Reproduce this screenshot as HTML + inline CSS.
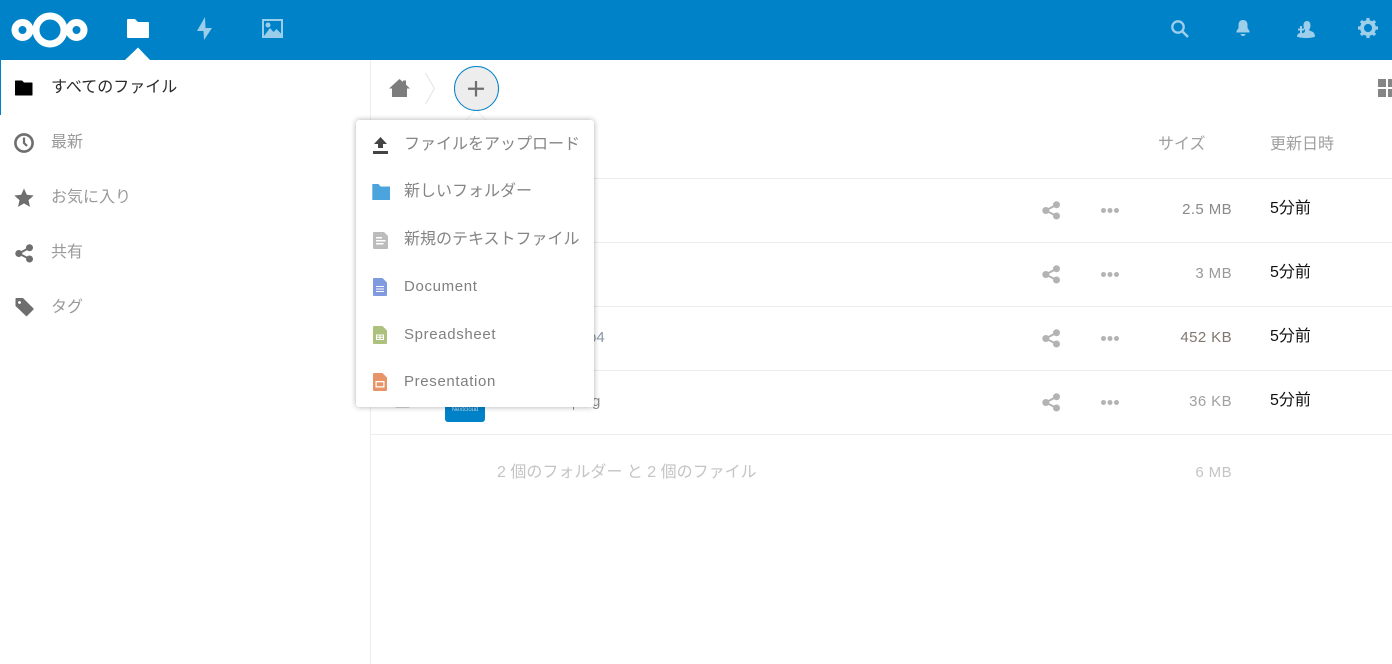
<!DOCTYPE html>
<html lang="ja"><head><meta charset="utf-8"><title>Files</title>
<style>
html,body{margin:0;padding:0;width:1392px;height:664px;overflow:hidden;background:#fff}
body{position:relative;font-family:"Liberation Sans","Noto Sans CJK JP",sans-serif;font-size:16px;color:#999}
.t{position:absolute;white-space:nowrap;line-height:20px}
.a{position:absolute;display:block}
.l{position:absolute;left:371px;right:0;height:1px;background:#ededed}
.e{font-size:15px;letter-spacing:.65px;color:#808080}
.m{color:#858585}
.s{font-size:15px;letter-spacing:.4px;color:#8a8a8a;text-align:right;width:80px;left:1152px}
.d{color:#111;left:1270px;font-size:16px}
</style></head><body>

<div class="a" style="left:0;top:0;width:1392px;height:60px;background:#0082c9"></div>
<svg class="a" style="left:11px;top:11px" width="78" height="38" viewBox="0 0 78 38"><g fill="none" stroke="#fff"><circle cx="39" cy="19" r="14" stroke-width="7"/><circle cx="11.500" cy="19" r="7.500" stroke-width="7"/><circle cx="65.500" cy="19" r="7.500" stroke-width="7"/></g></svg>
<svg class="a" style="left:127px;top:19px" width="22" height="19" viewBox="0 0 22 19"><path fill="#fff" d="M1 0h7l3 3h10q1 0 1 1v14q0 1-1 1H1q-1 0-1-1V1q0-1 1-1z"/></svg>
<svg class="a" style="left:125px;top:46px" width="26" height="14" viewBox="0 0 26 14"><path fill="#fff" d="M13 1.500L25 14H0z"/></svg>
<svg class="a" style="left:195px;top:17px" width="20" height="24" viewBox="0 0 20 24" opacity=".6"><path fill="#fff" d="M10 0L2 14H8.500L9 23L17 11H10.500z"/></svg>
<svg class="a" style="left:262px;top:19px" width="21" height="19" viewBox="0 0 21 19" opacity=".6"><path fill="#fff" fill-rule="evenodd" d="M0 0h21v19H0zM2 2v15h17V2z"/><path fill="#fff" d="M2 17l6-8 3.500 4 3-3 4.500 4.500V17z"/><circle fill="#fff" cx="6" cy="6" r="2.500"/></svg>

<svg class="a" style="left:1170px;top:19px" width="20" height="20" viewBox="0 0 20 20" opacity=".62"><circle cx="8" cy="8" r="5.700" fill="none" stroke="#fff" stroke-width="2.300"/><path d="M12 12l6 6" stroke="#fff" stroke-width="2.600"/></svg>
<svg class="a" style="left:1236px;top:20px" width="14" height="16" viewBox="0 0 14 16" opacity=".62"><path fill="#fff" d="M7 0c3 0 4.500 2 4.500 5v3l2 3v1.500H.5V11l2-3V5C2.500 2 4 0 7 0zM4.500 14h5Q9 16 7 16t-2.500-2z"/></svg>
<svg class="a" style="left:1297px;top:20px" width="18" height="18" viewBox="0 0 18 18" opacity=".62"><path fill="#fff" d="M10 1c2.500 0 3.500 2 3.500 4.500 0 2-1 3.500-1.500 4.500 0 1 4 1 5.300 3.500.5 1 .7 2.500.7 3-1 1-5 1.500-8.500 1.500S1 17.500 0 16.500c0-1.500 1-3 3-3.500V10.500H1V8.500h2V6h2v2.500h2v2H5V13c2 0 3-.5 3-2.500C7.500 9.500 6.500 8 6.500 5.500 6.500 3 7.500 1 10 1z"/></svg>
<svg class="a" style="left:1358px;top:18px" width="20" height="20" viewBox="0 0 20 20" opacity=".62"><circle cx="10" cy="10" r="6" fill="none" stroke="#fff" stroke-width="3.800"/><path d="M10 0v20M0 10h20M3 3l14 14M17 3L3 17" stroke="#fff" stroke-width="3.200" stroke-dasharray="3.200 13.600 3.200 30"/></svg>

<div class="a" style="left:370px;top:60px;width:1px;height:604px;background:#ededed"></div>
<div class="a" style="left:0;top:60px;width:1px;height:55px;background:#0082c9"></div>

<svg class="a" style="left:15px;top:79px" width="18" height="17" viewBox="0 0 18 17"><path fill="#000" d="M.5 1.500h6.500l2 2h8q.5 0 .5.500v12q0 .5-.5.500H.5q-.5 0-.5-.5V2q0-.5.500-.5z"/></svg>
<div class="t" style="left:51px;top:78px;color:#2a2a2a">すべてのファイル</div>
<svg class="a" style="left:14px;top:133px" width="20" height="20" viewBox="0 0 20 20"><circle cx="10" cy="10" r="8.600" fill="none" stroke="#6e6e6e" stroke-width="2.600"/><path d="M10 4.500V10l3 3" fill="none" stroke="#6e6e6e" stroke-width="2.200"/></svg>
<div class="t" style="left:51px;top:133px">最新</div>
<svg class="a" style="left:14px;top:188px" width="20" height="20" viewBox="0 0 20 20"><path fill="#6e6e6e" d="M10 .5l2.800 6.300 6.900.7-5.200 4.600 1.500 6.800-6-3.500-6 3.500 1.500-6.800L.3 7.500l6.900-.7z"/></svg>
<div class="t" style="left:51px;top:188px">お気に入り</div>
<svg class="a" style="left:15px;top:244px" width="19" height="19" viewBox="0 0 19 19"><g fill="#6e6e6e"><circle cx="14.500" cy="3.700" r="3.500"/><circle cx="14.500" cy="15" r="3.500"/><circle cx="3.800" cy="9.500" r="3.500"/></g><path d="M14.500 3.700L3.800 9.500l10.700 5.500" fill="none" stroke="#6e6e6e" stroke-width="2"/></svg>
<div class="t" style="left:51px;top:243px">共有</div>
<svg class="a" style="left:15px;top:298px" width="19" height="19" viewBox="0 0 19 19"><path fill="#6e6e6e" fill-rule="evenodd" d="M1 0h7l10.500 10.500q.5.500 0 1L12 18q-.5.500-1 0L.5 8V1Q.5 0 1 0zM4.500 3a1.500 1.500 0 1 0 .01 0z"/></svg>
<div class="t" style="left:51px;top:298px">タグ</div>

<svg class="a" style="left:389px;top:79px" width="21" height="19" viewBox="0 0 21 19"><path fill="#7d7d7d" d="M10.500 0l3.500 3V1.500h3v4.300l4 3.700h-3V18H3V9.500H0z"/></svg>
<svg class="a" style="left:424px;top:72px" width="13" height="33" viewBox="0 0 13 33"><path d="M1.500 1l9 15.500-9 15.500" fill="none" stroke="#e4e4e4" stroke-width="1"/></svg>
<div class="a" style="left:454px;top:66px;width:43px;height:43px;border:1px solid #0082c9;border-radius:50%;background:#ededed"></div>
<svg class="a" style="left:468px;top:81px" width="16" height="16" viewBox="0 0 16 16"><path d="M8 0v15.500M0 7.750h16" stroke="#6f6f6f" stroke-width="2.200"/></svg>
<svg class="a" style="left:1378px;top:79px" width="14" height="18" viewBox="0 0 14 18"><path fill="#858585" d="M0 0h8v8H0zM10 0h4v8h-4zM0 10h8v8H0zM10 10h4v8h-4z"/></svg>

<div class="t" style="left:1158px;top:135px;color:#a0a0a0">サイズ</div>
<div class="t" style="left:1270px;top:135px;color:#a0a0a0">更新日時</div>
<div class="l" style="top:178px"></div><div class="l" style="top:242px"></div><div class="l" style="top:306px"></div><div class="l" style="top:370px"></div><div class="l" style="top:434px"></div>

<svg width="0" height="0" style="position:absolute"><defs>
<g id="sh"><g fill="#b3b3b3"><circle cx="14.500" cy="3.700" r="3.500"/><circle cx="14.500" cy="15" r="3.500"/><circle cx="3.800" cy="9.500" r="3.500"/></g><path d="M14.500 3.700L3.800 9.500l10.700 5.500" fill="none" stroke="#b3b3b3" stroke-width="2"/></g>
<g id="dt" fill="#b3b3b3"><circle cx="2.500" cy="2.500" r="2.500"/><circle cx="9" cy="2.500" r="2.500"/><circle cx="15.500" cy="2.500" r="2.500"/></g>
</defs></svg>
<svg class="a" style="left:1042px;top:201px" width="19" height="19"><use href="#sh"/></svg>
<svg class="a" style="left:1042px;top:265px" width="19" height="19"><use href="#sh"/></svg>
<svg class="a" style="left:1042px;top:329px" width="19" height="19"><use href="#sh"/></svg>
<svg class="a" style="left:1042px;top:393px" width="19" height="19"><use href="#sh"/></svg>
<svg class="a" style="left:1101px;top:208px" width="18" height="5"><use href="#dt"/></svg>
<svg class="a" style="left:1101px;top:272px" width="18" height="5"><use href="#dt"/></svg>
<svg class="a" style="left:1101px;top:336px" width="18" height="5"><use href="#dt"/></svg>
<svg class="a" style="left:1101px;top:400px" width="18" height="5"><use href="#dt"/></svg>

<div class="t s" style="top:200px">2.5 MB</div>
<div class="t s" style="top:264px;color:#999">3 MB</div>
<div class="t s" style="top:328px;color:#80786f">452 KB</div>
<div class="t s" style="top:392px;color:#a0a0a0">36 KB</div>
<div class="t d" style="top:199px">5分前</div>
<div class="t d" style="top:263px">5分前</div>
<div class="t d" style="top:327px">5分前</div>
<div class="t d" style="top:391px">5分前</div>

<div class="t" style="left:588px;top:328px;font-size:15px;color:#8a94a3">p4</div>
<div class="a" style="left:573px;top:397px;width:1px;height:13px;background:#8a94a3"></div>
<div class="t" style="left:592px;top:392px;font-size:15px;color:#8a8a8a">g</div>
<div class="a" style="left:395px;top:400px;width:13px;height:7px;border:1px solid #d8d8d8;border-top:0;border-radius:0 0 2px 2px"></div>
<div class="a" style="left:445px;top:395px;width:40px;height:27px;background:#0082c9;border-radius:0 0 3px 3px"></div>
<div class="t" style="left:445px;top:405px;width:40px;text-align:center;font-size:6px;line-height:10px;color:#b9dcf0">Nextcloud</div>

<div class="t" style="left:497px;top:463px;color:#c4c4c4">2 個のフォルダー と 2 個のファイル</div>
<div class="t" style="left:1152px;top:463px;width:80px;text-align:right;font-size:15px;letter-spacing:.4px;color:#c4c4c4">6 MB</div>

<svg class="a" style="left:465px;top:110px;filter:drop-shadow(0 0 1px rgba(0,0,0,.12))" width="22" height="12" viewBox="0 0 22 12"><path fill="#fff" d="M11 0.500L21 11H1z"/></svg>
<div class="a" style="left:356px;top:120px;width:238px;height:287px;background:#fff;border-radius:3px;box-shadow:0 0 6px rgba(0,0,0,.32)"></div>

<svg class="a" style="left:372px;top:137px" width="17" height="17" viewBox="0 0 17 17"><path fill="#444" d="M8.500 0l6.500 7h-4v4H6V7H2zM1 14h15v3H1z"/></svg>
<div class="t m" style="left:404px;top:135px">ファイルをアップロード</div>
<svg class="a" style="left:372px;top:184px" width="18" height="16" viewBox="0 0 18 16"><path fill="#4ba4dc" d="M.3 0h6.200l2 2.500H18V16H.3z"/></svg>
<div class="t m" style="left:404px;top:182px">新しいフォルダー</div>
<svg class="a" style="left:373px;top:231px" width="16" height="18" viewBox="0 0 16 18"><path fill="#bcbcbc" fill-rule="evenodd" d="M1 1h10l4 4v12q0 1-1 1H1q-1 0-1-1V2q0-1 1-1zM3 6v1.500h6V6zM3 9v1.500h9.500V9zM3 12v1.500h7.500V12z"/></svg>
<div class="t m" style="left:404px;top:230px">新規のテキストファイル</div>
<svg class="a" style="left:373px;top:278px" width="15" height="18" viewBox="0 0 15 18"><path fill="#7f9ade" fill-rule="evenodd" d="M1 0h8.500L14 4.500V17q0 1-1 1H1q-1 0-1-1V1q0-1 1-1zM3 8v1h8V8zM3 10.500v1h8v-1zM3 13v1h8v-1z"/></svg>
<div class="t e" style="left:404px;top:277px">Document</div>
<svg class="a" style="left:373px;top:326px" width="15" height="18" viewBox="0 0 15 18"><path fill="#adc17f" fill-rule="evenodd" d="M1 0h8.500L14 4.500V17q0 1-1 1H1q-1 0-1-1V1q0-1 1-1zM3 8.500V14h8V8.500zM4 9.500h2.500v1.300H4zM7.500 9.500H10v1.300H7.500zM4 11.700h2.500V13H4zM7.500 11.700H10V13H7.500z"/></svg>
<div class="t e" style="left:404px;top:325px">Spreadsheet</div>
<svg class="a" style="left:373px;top:373px" width="15" height="18" viewBox="0 0 15 18"><path fill="#e79468" fill-rule="evenodd" d="M1 0h8.500L14 4.500V17q0 1-1 1H1q-1 0-1-1V1q0-1 1-1zM2.500 8v6.500h9V8zM3.700 9.200h6.600v4.100H3.700z"/></svg>
<div class="t e" style="left:404px;top:372px">Presentation</div>

</body></html>
